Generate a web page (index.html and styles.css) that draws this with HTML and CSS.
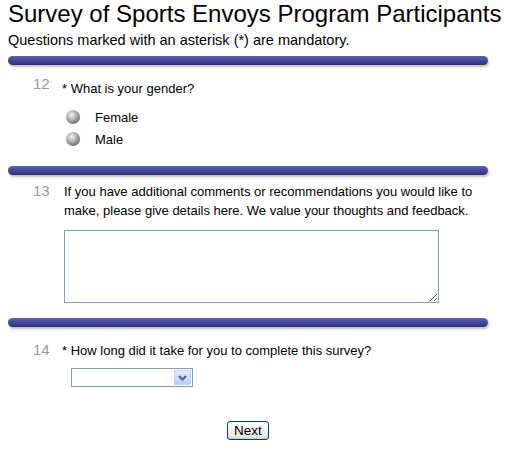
FILE: index.html
```html
<!DOCTYPE html>
<html>
<head>
<meta charset="utf-8">
<link rel="stylesheet" href="styles.css">
</head>
<body>
<div class="page">
  <h1 class="title">Survey of Sports Envoys Program Participants</h1>
  <p class="subtitle">Questions marked with an asterisk (*) are mandatory.</p>

  <div class="bar"></div>
  <div class="question q12">
    <div class="num">12</div>
    <div class="body">
      <div class="text">* What is your gender?</div>
      <div class="options">
        <label class="option"><span class="radio"></span><span>Female</span></label>
        <label class="option"><span class="radio"></span><span>Male</span></label>
      </div>
    </div>
  </div>

  <div class="bar"></div>
  <div class="question q13">
    <div class="num">13</div>
    <div class="body">
      <div class="text">If you have additional comments or recommendations you would like to make, please give details here. We value your thoughts and feedback.</div>
      <textarea class="comments"></textarea>
    </div>
  </div>

  <div class="bar"></div>
  <div class="question q14">
    <div class="num">14</div>
    <div class="body">
      <div class="text">* How long did it take for you to complete this survey?</div>
      <div class="select">
        <span class="select-value"></span>
        <span class="select-btn">
          <svg width="9" height="6" viewBox="0 0 9 6"><path d="M1 1 L4.5 4.5 L8 1" fill="none" stroke="#4d6185" stroke-width="2"/></svg>
        </span>
      </div>
    </div>
  </div>

  <div class="actions">
    <button class="next">Next</button>
  </div>
</div>
</body>
</html>
```

FILE: styles.css
```css
html, body {
  margin: 0;
  padding: 0;
  background: #ffffff;
}
body {
  font-family: "Liberation Sans", Arial, sans-serif;
  color: #000;
}
.page {
  width: 480px;
  padding: 0 8px;
}
.title {
  margin: 0;
  font-size: 24px;
  line-height: 28px;
  font-weight: normal;
  white-space: nowrap;
}
.subtitle {
  margin: 3px 0 0;
  font-size: 14.5px;
  line-height: 18px;
}
.bar {
  height: 9px;
  margin-top: 7px;
  border-radius: 5px;
  background: linear-gradient(#6262b4, #4a4aa0 40%, #36368a 85%, #2a2a78);
  box-shadow: 1px 2px 2px rgba(120, 120, 110, 0.45);
}
.question {
  display: flex;
}
.num {
  width: 29px;
  padding-left: 25px;
  font-size: 15px;
  color: #999;
  line-height: 18px;
}
.body {
  flex: 1;
}
.text {
  font-size: 13px;
  line-height: 19px;
}
.q12 {
  padding-top: 10px;
}
.q12 .text {
  padding-top: 4px;
}
.options {
  margin-top: 8px;
  padding-left: 4px;
  padding-bottom: 9px;
}
.option {
  display: flex;
  align-items: center;
  height: 22px;
  font-size: 13px;
}
.radio {
  width: 14px;
  height: 14px;
  border-radius: 50%;
  margin-right: 15px;
  background: radial-gradient(circle at 40% 35%, #f2f2f2 0%, #b8b8b8 35%, #6e6e6e 75%, #4a4a4a 100%);
}
.q13 {
  padding-top: 7px;
}
.q13 .text {
  padding-left: 2px;
  padding-right: 10px;
}
.comments {
  display: block;
  margin: 10px 0 8px 2px;
  width: 375px;
  height: 73px;
  box-sizing: border-box;
  border: 1px solid #7f9db9;
  padding: 2px;
  resize: both;
  font-family: inherit;
}
.q14 {
  padding-top: 14px;
}
.select {
  display: flex;
  width: 122px;
  height: 19px;
  box-sizing: border-box;
  border: 1px solid #7f9db9;
  margin: 8px 0 0 9px;
  background: #fff;
}
.select-value {
  flex: 1;
}
.select-btn {
  width: 15px;
  margin: 1px;
  display: flex;
  align-items: center;
  justify-content: center;
  border: 1px solid #c3d3fd;
  border-radius: 1px;
  background: linear-gradient(#dfe9ff, #b9cdf8);
}
.actions {
  display: flex;
  justify-content: center;
  padding-top: 34px;
}
.next {
  font-family: inherit;
  font-size: 13.5px;
  height: 19px;
  padding: 0 6px;
  line-height: 15px;
  border: 1px solid #003c74;
  border-radius: 3px;
  background: linear-gradient(#ffffff, #ecebe6 80%, #d6d0c5);
  color: #000;
}
```
